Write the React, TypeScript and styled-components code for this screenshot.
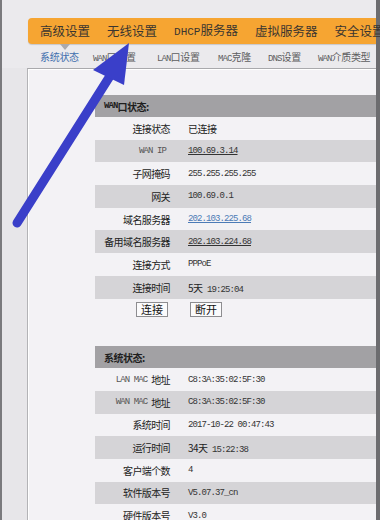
import styled, { createGlobalStyle } from "styled-components";

const GlobalStyle = createGlobalStyle`
  body {
    margin: 0;
    background: #ebeaed;
    font-family: "Noto Sans CJK SC", "Liberation Sans", sans-serif;
  }
`;

const MONO = `"Liberation Mono", "Noto Sans CJK SC", monospace`;
const CJK = `"Noto Sans CJK SC", "Liberation Sans", sans-serif`;

const Page = styled.div`
  position: relative;
  width: 380px;
  height: 520px;
  overflow: hidden;
  display: flex;
  background: #ebeaed;
  border-left: 2px solid #7a7a7d;
  box-sizing: border-box;
`;

const Main = styled.div`
  flex: 1;
  display: flex;
  flex-direction: column;
  min-width: 0;
`;

const RightBar = styled.div`
  width: 4px;
  background: #6c6c6f;
`;

const TopStrip = styled.div`
  flex: none;
  height: 18px;
  overflow: hidden;
  padding-left: 35px;
`;

const SiteTitle = styled.div`
  margin-top: -25px;
  font-family: ${CJK};
  font-size: 22px;
  line-height: 22px;
  letter-spacing: 4px;
  color: #b3b3b6;
  white-space: nowrap;
`;

const NavBar = styled.div`
  flex: none;
  margin-left: 26px;
  height: 26px;
  background: #f6a532;
  border-radius: 4px 0 0 4px;
  box-shadow: 0 1px 1px rgba(0, 0, 0, 0.15);
  display: flex;
  align-items: center;
  gap: 17px;
  padding-left: 12px;
  white-space: nowrap;
`;

const NavItem = styled.span<{ $active?: boolean }>`
  position: relative;
  font-family: ${CJK};
  font-size: 12.5px;
  color: #3a3530;
  line-height: 26px;
  &::after {
    content: "";
    display: ${(p) => (p.$active ? "block" : "none")};
    position: absolute;
    left: 50%;
    bottom: -6px;
    margin-left: -5px;
    border-left: 5px solid transparent;
    border-right: 5px solid transparent;
    border-top: 6px solid #aaa9ac;
  }
`;

const NavLatin = styled.span`
  font-family: ${MONO};
  font-size: 11px;
`;

const SubNav = styled.div`
  flex: none;
  height: 24px;
  display: flex;
  align-items: flex-end;
  padding: 0 0 4px 38px;
  box-sizing: border-box;
  white-space: nowrap;
`;

const SubItem = styled.span<{ $w: number; $active?: boolean }>`
  flex: none;
  width: ${(p) => p.$w}px;
  font-family: ${CJK};
  font-size: 10px;
  letter-spacing: -0.3px;
  color: ${(p) => (p.$active ? "#3f6fae" : "#5d5d60")};
`;

const Mono = styled.span`
  font-family: ${MONO};
  font-size: 9px;
  letter-spacing: -0.9px;
`;

const Body = styled.div`
  flex: 1;
  min-height: 0;
  display: flex;
`;

const LeftStrip = styled.div`
  width: 25px;
  background: #e7e6e9;
`;

const Panel = styled.div`
  flex: 1;
  background: #f3f2f5;
  border-top: 1px solid #a9a9ac;
  border-left: 1px solid #b3b3b6;
  box-shadow: inset 1px 1px 0 #ffffff;
  padding: 26px 0 0 67px;
  display: flex;
  flex-direction: column;
`;

const Section = styled.div<{ $gap?: number }>`
  flex: none;
  margin-top: ${(p) => p.$gap ?? 0}px;
`;

const SectionHead = styled.div`
  height: 22px;
  background: #a2a1a4;
  padding-left: 9px;
  display: flex;
  align-items: center;
  font-family: ${CJK};
  font-size: 10px;
  font-weight: 700;
  letter-spacing: -0.5px;
  color: #1e1e1e;
`;

const Row = styled.div<{ $shade?: boolean }>`
  height: 22.7px;
  display: grid;
  grid-template-columns: 85px 1fr;
  align-items: center;
  background: ${(p) => (p.$shade ? "#d5d4d7" : "#f3f2f5")};
`;

const Label = styled.div`
  padding-right: 10px;
  font-family: ${CJK};
  font-size: 10px;
  letter-spacing: -0.6px;
  color: #222;
  white-space: nowrap;
  display: flex;
  justify-content: flex-end;
  align-items: center;
`;

const LabelMono = styled.span`
  font-family: ${MONO};
  font-size: 9px;
  letter-spacing: -0.9px;
  color: #555;
  margin-right: 4px;
`;

const Value = styled.div`
  padding-left: 8px;
  font-family: ${MONO};
  font-size: 9px;
  letter-spacing: -0.9px;
  color: #333;
  white-space: nowrap;
`;

const CjkText = styled.span`
  font-family: ${CJK};
  font-size: 10px;
  letter-spacing: -0.5px;
  color: #222;
`;

const Link = styled.span<{ $blue?: boolean }>`
  text-decoration: underline;
  color: ${(p) => (p.$blue ? "#4c7bb6" : "#333")};
`;

const Button = styled.button`
  height: 15px;
  padding: 0 4px;
  font-family: ${CJK};
  font-size: 11px;
  line-height: 13px;
  color: #111;
  background: #fbfbfc;
  border: 1px solid #8d8d90;
  border-radius: 0;
`;

const ButtonCell = styled.div<{ $right?: boolean }>`
  display: flex;
  justify-content: ${(p) => (p.$right ? "flex-end" : "flex-start")};
  padding: ${(p) => (p.$right ? "0 12px 0 0" : "0 0 0 10px")};
`;

const Arrow = styled.svg`
  position: absolute;
  left: 0;
  top: 0;
  pointer-events: none;
`;

type Item = { label: React.ReactNode; value: React.ReactNode };

const wanRows: Item[] = [
  { label: "连接状态", value: <CjkText>已连接</CjkText> },
  { label: <LabelMono>WAN IP</LabelMono>, value: <Link>100.69.3.14</Link> },
  { label: "子网掩码", value: "255.255.255.255" },
  { label: "网关", value: "100.69.0.1" },
  { label: "域名服务器", value: <Link $blue>202.103.225.68</Link> },
  { label: "备用域名服务器", value: <Link>202.103.224.68</Link> },
  { label: "连接方式", value: "PPPoE" },
  {
    label: "连接时间",
    value: (
      <>
        <CjkText>5天</CjkText> 19:25:04
      </>
    ),
  },
];

const sysRows: Item[] = [
  {
    label: (
      <>
        <LabelMono>LAN MAC</LabelMono>地址
      </>
    ),
    value: "C8:3A:35:02:5F:30",
  },
  {
    label: (
      <>
        <LabelMono>WAN MAC</LabelMono>地址
      </>
    ),
    value: "C8:3A:35:02:5F:30",
  },
  { label: "系统时间", value: "2017-10-22 00:47:43" },
  {
    label: "运行时间",
    value: (
      <>
        <CjkText>34天</CjkText> 15:22:38
      </>
    ),
  },
  { label: "客户端个数", value: "4" },
  { label: "软件版本号", value: "V5.07.37_cn" },
  { label: "硬件版本号", value: "V3.0" },
];

function App() {
  return (
    <>
      <GlobalStyle />
      <Page>
        <Main>
          <TopStrip>
            <SiteTitle>路由器管理页面设置</SiteTitle>
          </TopStrip>
          <NavBar>
            <NavItem $active>高级设置</NavItem>
            <NavItem>无线设置</NavItem>
            <NavItem>
              <NavLatin>DHCP</NavLatin>服务器
            </NavItem>
            <NavItem>虚拟服务器</NavItem>
            <NavItem>安全设置</NavItem>
          </NavBar>
          <SubNav>
            <SubItem $w={53} $active>
              系统状态
            </SubItem>
            <SubItem $w={64}>
              <Mono>WAN</Mono>口设置
            </SubItem>
            <SubItem $w={61}>
              <Mono>LAN</Mono>口设置
            </SubItem>
            <SubItem $w={50}>
              <Mono>MAC</Mono>克隆
            </SubItem>
            <SubItem $w={50}>
              <Mono>DNS</Mono>设置
            </SubItem>
            <SubItem $w={70}>
              <Mono>WAN</Mono>介质类型
            </SubItem>
          </SubNav>
          <Body>
            <LeftStrip />
            <Panel>
              <Section>
                <SectionHead>
                  <Mono>WAN</Mono>口状态:
                </SectionHead>
                {wanRows.map((r, i) => (
                  <Row key={i} $shade={i % 2 === 1}>
                    <Label>{r.label}</Label>
                    <Value>{r.value}</Value>
                  </Row>
                ))}
                <Row>
                  <ButtonCell $right>
                    <Button>连接</Button>
                  </ButtonCell>
                  <ButtonCell>
                    <Button>断开</Button>
                  </ButtonCell>
                </Row>
              </Section>
              <Section $gap={25}>
                <SectionHead>系统状态:</SectionHead>
                {sysRows.map((r, i) => (
                  <Row key={i} $shade={i % 2 === 1}>
                    <Label>{r.label}</Label>
                    <Value>{r.value}</Value>
                  </Row>
                ))}
              </Section>
            </Panel>
          </Body>
        </Main>
        <RightBar />
        <Arrow width="380" height="520" viewBox="0 0 380 520">
          <line
            x1="15"
            y1="223"
            x2="108"
            y2="76"
            stroke="#3a3fc9"
            strokeWidth="9"
            strokeLinecap="round"
          />
          <polygon points="127,43 91,70 122,85" fill="#3a3fc9" />
        </Arrow>
      </Page>
    </>
  );
}

export default App;
